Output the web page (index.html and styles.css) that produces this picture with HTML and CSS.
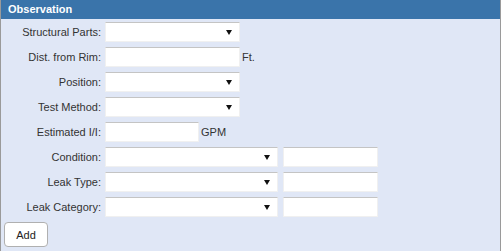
FILE: index.html
```html
<!DOCTYPE html>
<html lang="en">
<head>
  <meta charset="UTF-8" />
  <title>Observation</title>
  <link rel="stylesheet" href="styles.css">
</head>
<body>
  <div class="panel">
    <div class="panel-title">Observation</div>

    <div class="form">
      <label>Structural Parts:</label>
      <div class="field"><div class="select w135"></div></div>

      <label>Dist. from Rim:</label>
      <div class="field"><div class="input w135"></div><span class="unit">Ft.</span></div>

      <label>Position:</label>
      <div class="field"><div class="select w135"></div></div>

      <label>Test Method:</label>
      <div class="field"><div class="select w135"></div></div>

      <label>Estimated I/I:</label>
      <div class="field"><div class="input w94"></div><span class="unit">GPM</span></div>

      <label>Condition:</label>
      <div class="field"><div class="select w173"></div><div class="input w95 ml5"></div></div>

      <label>Leak Type:</label>
      <div class="field"><div class="select w173"></div><div class="input w95 ml5"></div></div>

      <label>Leak Category:</label>
      <div class="field"><div class="select w173"></div><div class="input w95 ml5"></div></div>
    </div>

    <div class="actions">
      <button>Add</button>
    </div>
  </div>
</body>
</html>
```

FILE: styles.css
```css
body {
  margin: 0;
  padding: 0;
  font-family: "Liberation Sans", Arial, sans-serif;
  font-size: 11px;
  color: #333;
}
.panel {
  width: 501px;
  height: 251px;
  box-sizing: border-box;
  background: #e0e7f6;
  border-left: 1px solid #9a9a9a;
  border-right: 1px solid #9a9a9a;
}
.panel-title {
  height: 19px;
  line-height: 19px;
  padding-left: 7px;
  background: #3a74aa;
  color: #fff;
  font-weight: bold;
}
.form {
  display: grid;
  grid-template-columns: 100px auto;
  column-gap: 4px;
  row-gap: 5px;
  padding-top: 3px;
}
label {
  height: 20px;
  line-height: 20px;
  text-align: right;
}
.field {
  display: flex;
  align-items: center;
  height: 20px;
}
.input,
.select {
  height: 20px;
  box-sizing: border-box;
  background: #fff;
  border: 1px solid #f0f0f0;
  border-top-color: #c4c4c4;
}
.select {
  display: flex;
  align-items: center;
  justify-content: flex-end;
  padding-right: 7px;
}
.select::after {
  content: "";
  border-left: 3px solid transparent;
  border-right: 3px solid transparent;
  border-top: 5px solid #111;
}
.w135 { width: 135px; }
.w94 { width: 94px; }
.w173 { width: 173px; }
.w95 { width: 95px; }
.ml5 { margin-left: 5px; }
.unit {
  margin-left: 2px;
}
.actions {
  padding: 5px 0 0 3px;
}
button {
  width: 44px;
  height: 25px;
  background: #fff;
  border: 1px solid #b0b0b0;
  border-radius: 4px;
  font-family: "Liberation Sans", Arial, sans-serif;
  font-size: 11px;
  color: #222;
  padding: 0;
}
```
